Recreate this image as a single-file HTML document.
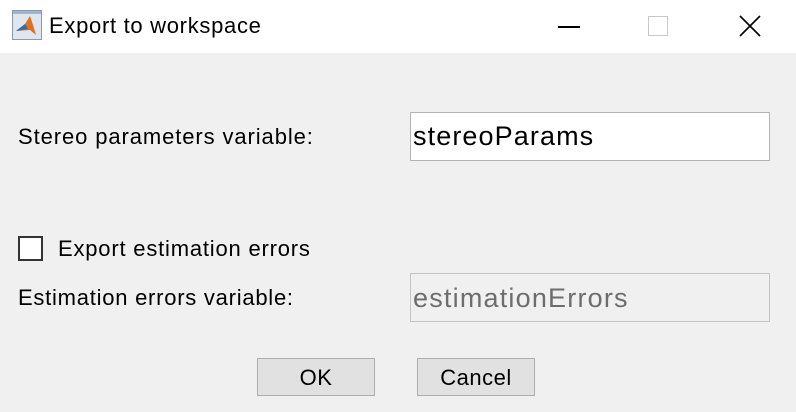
<!DOCTYPE html>
<html><head><style>
body{margin:0;width:796px;height:412px;background:#f0f0f0;font-family:"Liberation Sans",Arial,sans-serif;position:relative;overflow:hidden}
.t{position:absolute;white-space:nowrap}
.title{position:absolute;left:0;top:0;width:796px;height:53px;background:#fff}
.box{position:absolute;box-sizing:border-box}
</style></head><body>
<div class="title">
<div class="box" style="left:12px;top:10px;width:30px;height:30px;background:#dfe6ee;border:1px solid #8a9aaa">
<svg width="28" height="28" style="position:absolute;left:0;top:0"><rect x="0" y="0" width="28" height="3" fill="#9db4cc"/><path d="M3 20 L12 13 L17 5 L23 24 L17 19 Z" fill="#e07020"/><path d="M3 20 L12 13 L15 18 Z" fill="#2a6fb0"/><path d="M17 5 L23 24 L20 14 Z" fill="#c04010"/></svg></div>
<div class="t" style="left:49px;top:13px;font-size:22px;letter-spacing:0.7px;color:#000">Export to workspace</div>
<div class="t" style="left:558px;top:26px;width:22px;height:2px;background:#000"></div>
<div class="box" style="left:648px;top:16px;width:20px;height:20px;border:1px solid #c8c8c8"></div>
<svg class="t" style="left:738px;top:14px" width="24" height="24"><path d="M2 2L22 22M22 2L2 22" stroke="#000" stroke-width="1.6"/></svg>
</div>
<div class="t" style="left:18px;top:124px;font-size:22px;letter-spacing:0.9px">Stereo parameters variable:</div>
<div class="box" style="left:410px;top:112px;width:360px;height:49px;background:#fff;border:1px solid #b4b4b4"></div>
<div class="t" style="left:413px;top:121px;font-size:27px;letter-spacing:1.1px">stereoParams</div>
<div class="box" style="left:18px;top:236px;width:25px;height:25px;background:#fff;border:2px solid #333"></div>
<div class="t" style="left:58px;top:236px;font-size:22px;letter-spacing:0.8px">Export estimation errors</div>
<div class="t" style="left:18px;top:285px;font-size:22px;letter-spacing:0.75px">Estimation errors variable:</div>
<div class="box" style="left:410px;top:273px;width:360px;height:49px;background:#f0f0f0;border:1px solid #c4c4c4"></div>
<div class="t" style="left:413px;top:283px;font-size:27px;letter-spacing:1.2px;color:#6d6d6d">estimationErrors</div>
<div class="box" style="left:257px;top:358px;width:118px;height:38px;background:#e1e1e1;border:1px solid #adadad"></div>
<div class="t" style="left:257px;top:365px;width:118px;text-align:center;font-size:22px;letter-spacing:0.5px">OK</div>
<div class="box" style="left:417px;top:358px;width:118px;height:38px;background:#e1e1e1;border:1px solid #adadad"></div>
<div class="t" style="left:417px;top:365px;width:118px;text-align:center;font-size:22px;letter-spacing:0.5px">Cancel</div>
</body></html>
